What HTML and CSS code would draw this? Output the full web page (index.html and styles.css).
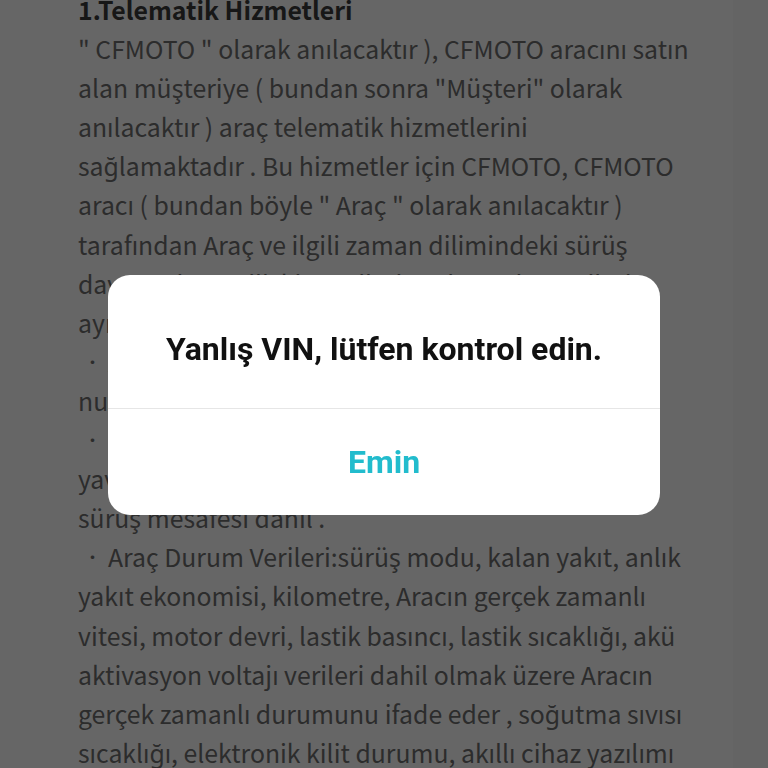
FILE: index.html
```html
<!DOCTYPE html>
<html lang="tr">
<head>
<meta charset="utf-8">
<link rel="stylesheet" href="styles.css">
</head>
<body>
<main class="page">
  <div class="content">
    <div class="line heading">1.Telematik Hizmetleri</div>
    <div class="line">" CFMOTO " olarak anılacaktır ), CFMOTO aracını satın</div>
    <div class="line">alan müşteriye ( bundan sonra "Müşteri" olarak</div>
    <div class="line">anılacaktır ) araç telematik hizmetlerini</div>
    <div class="line">sağlamaktadır . Bu hizmetler için CFMOTO, CFMOTO</div>
    <div class="line">aracı ( bundan böyle " Araç " olarak anılacaktır )</div>
    <div class="line">tarafından Araç ve ilgili zaman dilimindeki sürüş</div>
    <div class="line">davranışlarına ilişkin verileri toplar ve bu verileri</div>
    <div class="line">ayrıntılı olarak analiz eder:</div>
    <div class="line"><span class="dot">•</span>Araç Kimlik Verileri: araç VIN numarası, motor</div>
    <div class="line">numarası dahil .</div>
    <div class="line"><span class="dot">•</span>Sürüş Verileri: ortalama hız, sürüş süresi,</div>
    <div class="line">yavaşlama ve hızlanma sayısı, toplam ve tek</div>
    <div class="line">sürüş mesafesi dahil .</div>
    <div class="line"><span class="dot">•</span>Araç Durum Verileri:sürüş modu, kalan yakıt, anlık</div>
    <div class="line">yakıt ekonomisi, kilometre, Aracın gerçek zamanlı</div>
    <div class="line">vitesi, motor devri, lastik basıncı, lastik sıcaklığı, akü</div>
    <div class="line">aktivasyon voltajı verileri dahil olmak üzere Aracın</div>
    <div class="line">gerçek zamanlı durumunu ifade eder , soğutma sıvısı</div>
    <div class="line">sıcaklığı, elektronik kilit durumu, akıllı cihaz yazılımı</div>
    <div class="line">sürümü dahil .</div>
  </div>
</main>
<div class="overlay">
  <div class="dialog">
    <div class="dialog-title">Yanlış VIN, lütfen kontrol edin.</div>
    <div class="dialog-btn">Emin</div>
  </div>
</div>
<div class="edge"></div>
</body>
</html>
```

FILE: styles.css
```css
html, body {
  margin: 0;
  padding: 0;
  width: 768px;
  height: 768px;
  overflow: hidden;
  background: #ffffff;
}
.page {
  padding: 0 20px 0 78px;
}
.content {
  margin-top: -10px;
  font-family: "Noto Sans CJK SC", "Noto Sans", sans-serif;
  font-size: 24.8px;
  line-height: 39.1px;
  color: #6f6f6f;
}
.line {
  white-space: nowrap;
}
.heading {
  font-weight: 700;
  color: #3a3a3a;
}
.dot {
  display: inline-block;
  width: 30px;
  padding-left: 6px;
  box-sizing: border-box;
  font-size: 17px;
  vertical-align: top;
}
.overlay {
  position: fixed;
  inset: 0;
  background: rgba(0, 0, 0, 0.6);
  display: flex;
  justify-content: center;
  align-items: center;
  padding-top: 22px;
  box-sizing: border-box;
}
.dialog {
  width: 552px;
  background: #ffffff;
  border-radius: 22px;
  overflow: hidden;
  font-family: Roboto, "Noto Sans", sans-serif;
  font-weight: 700;
  text-align: center;
}
.dialog-title {
  height: 134px;
  display: flex;
  align-items: center;
  justify-content: center;
  font-size: 32px;
  color: #111111;
  border-bottom: 1px solid #e6e6e6;
  box-sizing: border-box;
  padding-top: 14px;
}
.dialog-btn {
  height: 106px;
  display: flex;
  align-items: center;
  justify-content: center;
  font-size: 32px;
  color: #22bccd;
}
.edge {
  position: fixed;
  top: 0;
  right: 0;
  width: 35px;
  height: 768px;
  background: rgba(0, 0, 0, 0.025);
}
```
